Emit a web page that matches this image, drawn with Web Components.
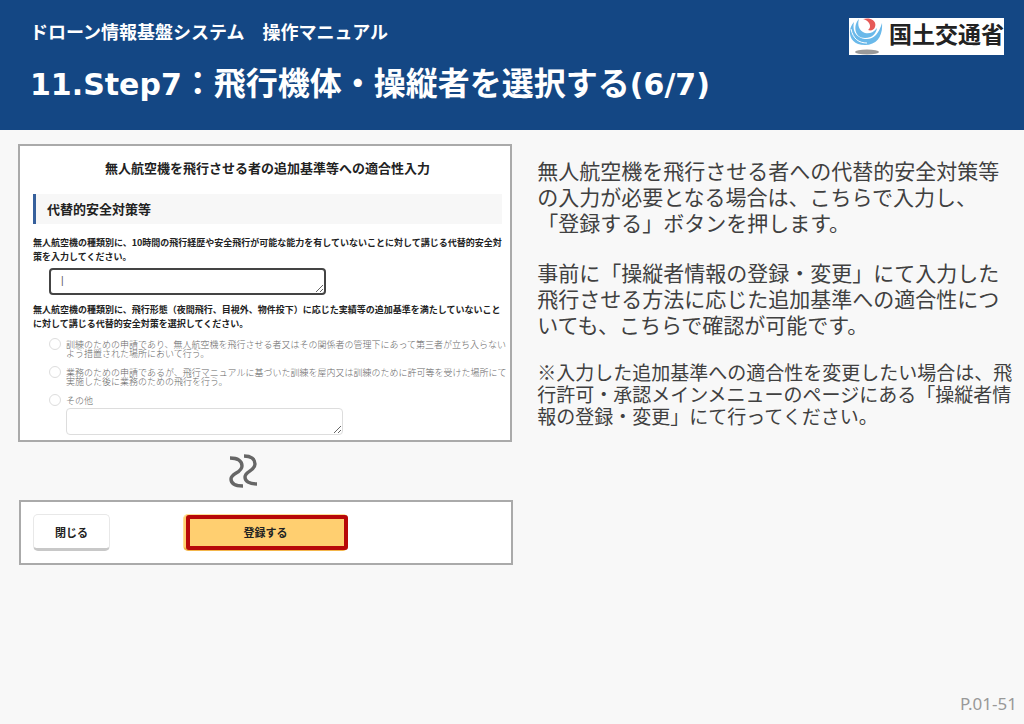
<!DOCTYPE html>
<html lang="ja">
<head>
<meta charset="utf-8">
<title>ドローン情報基盤システム 操作マニュアル</title>
<style>
    body {
        margin: 0;
        background: #f8f8f8;
        color: #404040;
        font-family: "Noto Sans CJK JP", sans-serif;
    }
</style>
</head>
<body>
<manual-page></manual-page>

<script>
class MinistryLogo extends HTMLElement {
    constructor() {
        super();
        const shadowRoot = this.attachShadow({ mode: 'open' });
        shadowRoot.innerHTML = /*html*/ `
            <style>
                :host {
                    display: flex;
                    align-items: flex-start;
                    gap: 4px;
                    height: 37px;
                    background: #fff;
                    color: #222;
                }

                svg {
                    display: block;
                }

                span {
                    font-size: 23px;
                    font-weight: 700;
                    line-height: 30px;
                    white-space: nowrap;
                }
            </style>

            <svg width="36" height="37" viewBox="0 0 36 37" aria-hidden="true">
                <ellipse cx="18" cy="34" rx="12" ry="2.6" fill="#999"/>
                <path d="M5 4 C-2 11 -1 27 16 27 C28 27 34 18 33 5 C30 16 24 22 16 21 C7 20 3 13 5 4Z" fill="#6ab9ea"/>
                <path d="M10 1 C4 7 5 20 16 20 C23 20 27 16 28 10 C24 15 20 16 16 15 C10 13 8 7 10 1Z" fill="#6ab9ea"/>
                <path d="M2 11 C4 21 10 25 18 25" fill="none" stroke="#fff" stroke-width="1"/>
                <path d="M14 1 C22 -1 28 3 26 9 C25 12 22 13 19 12 C23 9 21 3 14 1Z" fill="#e65a58"/>
            </svg>
            <span>国土交通省</span>
        `;
    }
}
customElements.define('ministry-logo', MinistryLogo)

class ManualHeader extends HTMLElement {
    constructor() {
        super();
        const shadowRoot = this.attachShadow({ mode: 'open' });
        shadowRoot.innerHTML = /*html*/ `
            <style>
                :host {
                    display: flex;
                    justify-content: space-between;
                    align-items: flex-start;
                    box-sizing: border-box;
                    min-height: 130px;
                    padding: 18px 20px 18px 30px;
                    background: #144784;
                    color: #fff;
                }

                p {
                    margin: 0 0 14px;
                    font-size: 18px;
                    font-weight: 700;
                    line-height: 27px;
                }

                h1 {
                    margin: 0;
                    font-size: 32px;
                    font-weight: 700;
                    line-height: 44px;
                }

                .latin {
                    font-family: "DejaVu Sans", sans-serif;
                    font-size: 30px;
                }
            </style>

            <div>
                <p><slot name="system"></slot></p>
                <h1><span class="latin">11.Step7</span>：飛行機体・操縦者を選択する<span class="latin">(6/7)</span></h1>
            </div>
            <ministry-logo></ministry-logo>
        `;
    }
}
customElements.define('manual-header', ManualHeader)

class FormPanel extends HTMLElement {
    constructor() {
        super();
        const shadowRoot = this.attachShadow({ mode: 'open' });
        shadowRoot.innerHTML = /*html*/ `
            <style>
                :host {
                    display: block;
                    border: 2px solid #aaa;
                    background: #fff;
                    color: #222;
                }
            </style>

            <slot></slot>
        `;
    }
}
customElements.define('form-panel', FormPanel)

class RadioOption extends HTMLElement {
    constructor() {
        super();
        const shadowRoot = this.attachShadow({ mode: 'open' });
        shadowRoot.innerHTML = /*html*/ `
            <style>
                :host {
                    display: block;
                }

                label {
                    display: flex;
                    align-items: flex-start;
                    gap: 5px;
                    color: #666;
                    font-size: 9px;
                    font-weight: 300;
                    line-height: 9px;
                    white-space: nowrap;
                }

                input {
                    appearance: none;
                    flex: none;
                    width: 12px;
                    height: 12px;
                    margin: 0;
                    border: 1px solid #ddd;
                    border-radius: 50%;
                    background: #fff;
                }

                input:checked {
                    border: 4px solid #144784;
                }

                span {
                    padding-top: 2px;
                }
            </style>

            <label><input type="radio" name="measure"><span><slot></slot></span></label>
        `;
    }
}
customElements.define('radio-option', RadioOption)

class SafetyForm extends HTMLElement {
    constructor() {
        super();
        const shadowRoot = this.attachShadow({ mode: 'open' });
        shadowRoot.innerHTML = /*html*/ `
            <style>
                :host {
                    display: block;
                    padding: 12px 8px 5px 13px;
                }

                h2, h3 {
                    margin: 0;
                    font-size: 13px;
                    font-weight: 700;
                }

                h2 {
                    line-height: 20px;
                    text-align: center;
                }

                h3 {
                    margin: 16px 0 12px;
                    padding-left: 11px;
                    border-left: 3px solid #36609c;
                    background: #f7f7f7;
                    line-height: 30px;
                }

                .question {
                    display: block;
                    font-size: 9px;
                    font-weight: 700;
                    line-height: 14px;
                    white-space: nowrap;
                }

                textarea {
                    display: block;
                    box-sizing: border-box;
                    width: 59%;
                    height: 27px;
                    margin: 4px 0 8px 16px;
                    padding: 4px 10px;
                    border: 2px solid #444;
                    border-radius: 4px;
                    background: #fff;
                    color: #555;
                    font: 10px/14px "Liberation Sans", sans-serif;
                    overflow: hidden;
                }

                .options {
                    display: grid;
                    gap: 8px;
                    margin: 7px 0 0 16px;
                }

                .options + textarea {
                    margin: 2px 0 0 33px;
                    border: 1px solid #ddd;
                }
            </style>

            <h2>無人航空機を飛行させる者の追加基準等への適合性入力</h2>
            <h3>代替的安全対策等</h3>
            <label class="question" for="measure-text">無人航空機の種類別に、10時間の飛行経歴や安全飛行が可能な能力を有していないことに対して講じる代替的安全対<br>策を入力してください。</label>
            <textarea id="measure-text">|</textarea>
            <div class="question" id="measure-question">無人航空機の種類別に、飛行形態（夜間飛行、目視外、物件投下）に応じた実績等の追加基準を満たしていないこと<br>に対して講じる代替的安全対策を選択してください。</div>
            <div class="options" role="radiogroup" aria-labelledby="measure-question">
                <radio-option>訓練のための申請であり、無人航空機を飛行させる者又はその関係者の管理下にあって第三者が立ち入らない<br>よう措置された場所において行う。</radio-option>
                <radio-option>業務のための申請であるが、飛行マニュアルに基づいた訓練を屋内又は訓練のために許可等を受けた場所にて<br>実施した後に業務のための飛行を行う。</radio-option>
                <radio-option>その他</radio-option>
            </div>
            <textarea aria-label="その他"></textarea>
        `;
    }
}
customElements.define('safety-form', SafetyForm)

class OmittedMark extends HTMLElement {
    constructor() {
        super();
        const shadowRoot = this.attachShadow({ mode: 'open' });
        shadowRoot.innerHTML = /*html*/ `
            <style>
                :host {
                    display: flex;
                    justify-content: center;
                    padding: 12px 42px 12px 0;
                }
            </style>

            <svg width="30" height="34" viewBox="0 0 30 34" fill="none" stroke="#666" stroke-width="3.4" aria-hidden="true">
                <path d="M1 4 C9 4 13 7 13 12 C13 19 2 19 2 25 C2 30 6 32 14 32"/>
                <path d="M15 2 C22 2 26 5 26 10 C26 17 16 17 16 23 C16 27 20 30 28 30"/>
            </svg>
        `;
    }
}
customElements.define('omitted-mark', OmittedMark)

class FormActions extends HTMLElement {
    constructor() {
        super();
        const shadowRoot = this.attachShadow({ mode: 'open' });
        shadowRoot.innerHTML = /*html*/ `
            <style>
                :host {
                    display: flex;
                    gap: 73px;
                    padding: 12px;
                }

                button {
                    position: relative;
                    box-sizing: border-box;
                    width: 77px;
                    height: 37px;
                    padding: 0;
                    border: 1px solid #e8e8e8;
                    border-bottom: 3px solid #c8c8c8;
                    border-radius: 5px;
                    background: #fff;
                    color: #222;
                    font: 700 11px/16px "Noto Sans CJK JP", sans-serif;
                }

                .register {
                    width: 165px;
                    border-color: #ffdf94;
                    border-bottom-color: #f3b64b;
                    background: #ffcf70;
                }

                /* highlight frame over the button to press */
                .register::after {
                    content: "";
                    position: absolute;
                    inset: 0 -1px -2px 2px;
                    border: 4px solid #b80808;
                    border-radius: 3px;
                }
            </style>

            <button type="button">閉じる</button>
            <button type="button" class="register">登録する</button>
        `;
    }
}
customElements.define('form-actions', FormActions)

class ManualText extends HTMLElement {
    constructor() {
        super();
        const shadowRoot = this.attachShadow({ mode: 'open' });
        shadowRoot.innerHTML = /*html*/ `
            <style>
                :host {
                    display: block;
                    padding-top: 13px;
                }

                p {
                    margin: 0 0 24px;
                    font-size: 21px;
                    line-height: 26px;
                    white-space: nowrap;
                }

                .note {
                    font-size: 19px;
                    line-height: 22px;
                }
            </style>

            <p>無人航空機を飛行させる者への代替的安全対策等<br>の入力が必要となる場合は、こちらで入力し、<br>「登録する」ボタンを押します。</p>
            <p>事前に「操縦者情報の登録・変更」にて入力した<br>飛行させる方法に応じた追加基準への適合性につ<br>いても、こちらで確認が可能です。</p>
            <p class="note">※入力した追加基準への適合性を変更したい場合は、飛<br>行許可・承認メインメニューのページにある「操縦者情<br>報の登録・変更」にて行ってください。</p>
        `;
    }
}
customElements.define('manual-text', ManualText)

class ManualPage extends HTMLElement {
    constructor() {
        super();
        const shadowRoot = this.attachShadow({ mode: 'open' });
        shadowRoot.innerHTML = /*html*/ `
            <style>
                :host {
                    display: flex;
                    flex-direction: column;
                    min-height: 100vh;
                }

                main {
                    display: grid;
                    grid-template-columns: minmax(0, 51fr) minmax(0, 49fr);
                    gap: 25px;
                    flex: 1;
                    padding: 14px 12px 0 18px;
                }

                form-panel + omitted-mark + form-panel {
                    margin: 0 -1px 0 1px;
                }

                footer {
                    padding: 0 7px 8px 0;
                    color: #999;
                    font-family: "Noto Sans", sans-serif;
                    font-size: 17px;
                    line-height: 24px;
                    text-align: right;
                }
            </style>

            <manual-header>
                <span slot="system">ドローン情報基盤システム　操作マニュアル</span>
            </manual-header>
            <main>
                <section>
                    <form-panel><safety-form></safety-form></form-panel>
                    <omitted-mark></omitted-mark>
                    <form-panel><form-actions></form-actions></form-panel>
                </section>
                <manual-text></manual-text>
            </main>
            <footer>P.01-51</footer>
        `;
    }
}
customElements.define('manual-page', ManualPage)
</script>
</body>
</html>
